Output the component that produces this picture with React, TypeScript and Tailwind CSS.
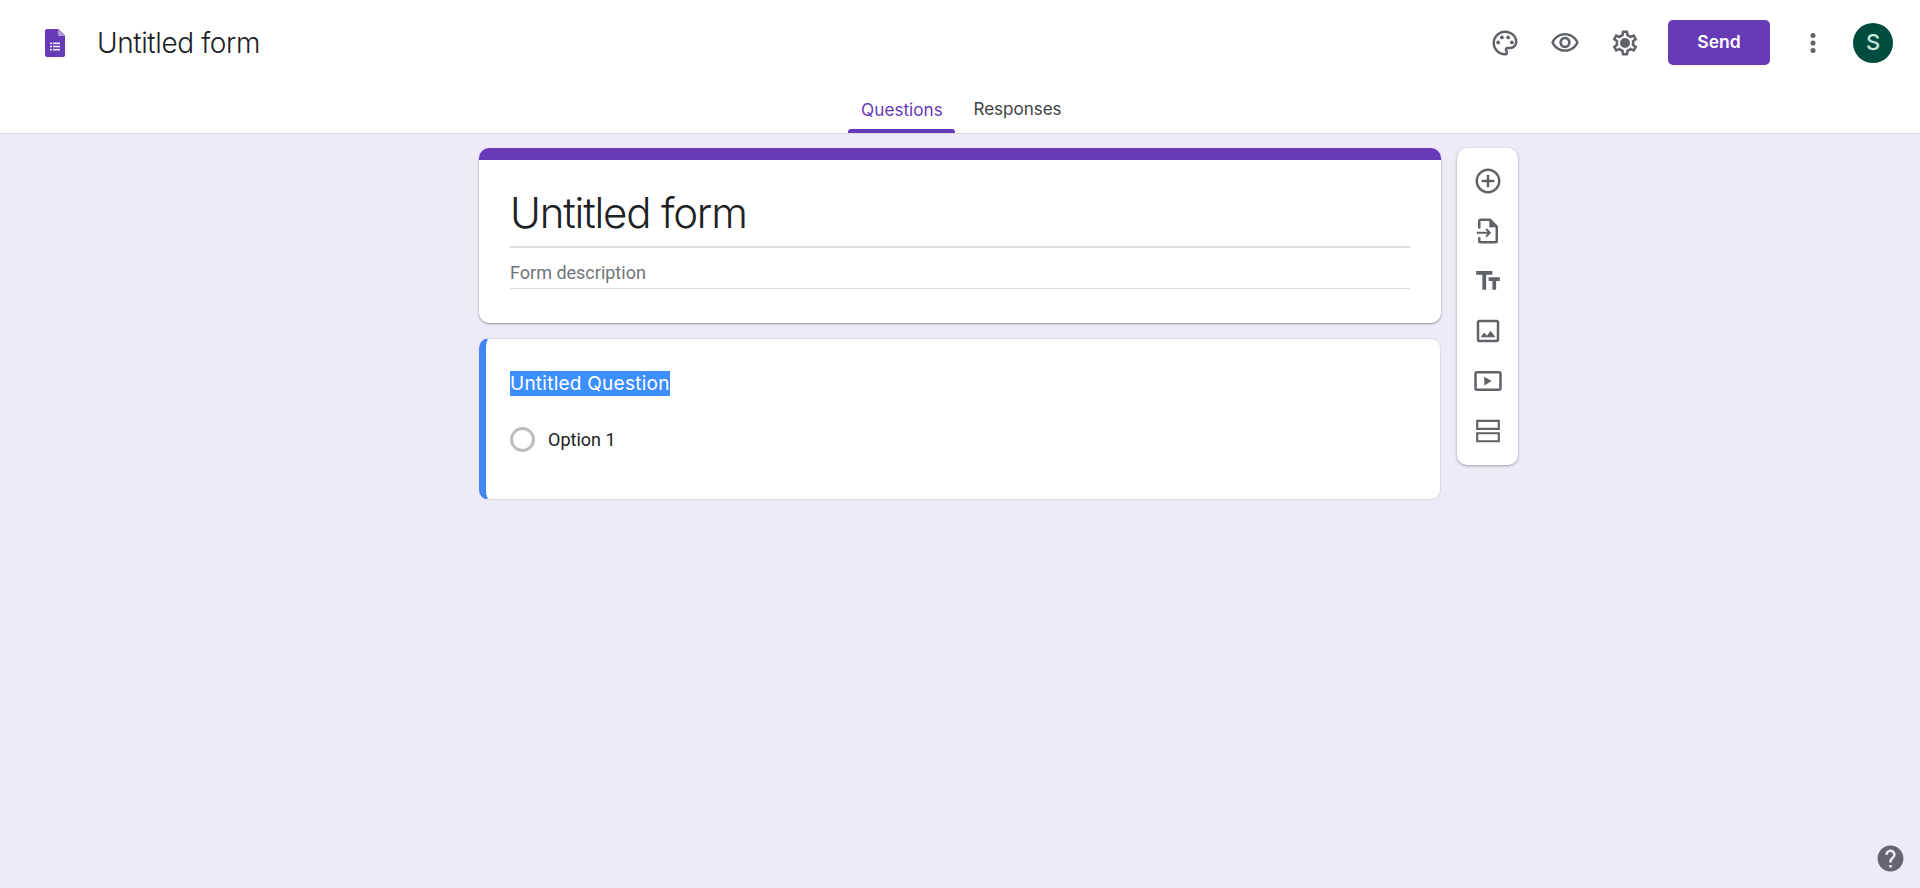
import React from 'react';

const Icon: React.FC<{ children: React.ReactNode }> = ({ children }) => (
  <svg viewBox="0 0 24 24" className="w-[30px] h-[30px] fill-[#5f6368] shrink-0">
    {children}
  </svg>
);

const PALETTE =
  'M12 22C6.49 22 2 17.51 2 12S6.49 2 12 2s10 4.04 10 9c0 3.31-2.69 6-6 6h-1.77c-.28 0-.5.22-.5.5 0 .12.05.23.13.33.41.47.64 1.06.64 1.67A2.5 2.5 0 0 1 12 22zm0-18c-4.41 0-8 3.59-8 8s3.59 8 8 8c.28 0 .5-.22.5-.5a.54.54 0 0 0-.14-.35c-.41-.46-.63-1.05-.63-1.65a2.5 2.5 0 0 1 2.5-2.5H16c2.21 0 4-1.79 4-4 0-3.86-3.59-7-8-7z';
const EYE =
  'M12 6c3.79 0 7.17 2.13 8.82 5.5C19.17 14.87 15.79 17 12 17s-7.17-2.13-8.82-5.5C4.83 8.13 8.21 6 12 6m0-2C7 4 2.73 7.11 1 11.5 2.73 15.89 7 19 12 19s9.27-3.11 11-7.5C21.27 7.11 17 4 12 4zm0 5c1.38 0 2.5 1.12 2.5 2.5S13.38 14 12 14s-2.5-1.12-2.5-2.5S10.62 9 12 9m0-2c-2.48 0-4.5 2.02-4.5 4.5S9.52 16 12 16s4.5-2.02 4.5-4.5S14.48 7 12 7z';
const GEAR =
  'M19.43 12.98c.04-.32.07-.64.07-.98 0-.34-.03-.66-.07-.98l2.11-1.65c.19-.15.24-.42.12-.64l-2-3.46c-.09-.16-.26-.25-.44-.25-.06 0-.12.01-.17.03l-2.49 1c-.52-.4-1.08-.73-1.69-.98l-.38-2.65C14.46 2.18 14.25 2 14 2h-4c-.25 0-.46.18-.49.42l-.38 2.65c-.61.25-1.17.59-1.69.98l-2.49-1c-.06-.02-.12-.03-.18-.03-.17 0-.34.09-.43.25l-2 3.46c-.13.22-.07.49.12.64l2.11 1.65c-.04.32-.07.65-.07.98 0 .33.03.66.07.98l-2.11 1.65c-.19.15-.24.42-.12.64l2 3.46c.09.16.26.25.44.25.06 0 .12-.01.17-.03l2.49-1c.52.4 1.08.73 1.69.98l.38 2.65c.03.24.24.42.49.42h4c.25 0 .46-.18.49-.42l.38-2.65c.61-.25 1.17-.59 1.69-.98l2.49 1c.06.02.12.03.18.03.17 0 .34-.09.43-.25l2-3.46c.12-.22.07-.49-.12-.64l-2.11-1.65zm-1.98-1.71c.04.31.05.52.05.73 0 .21-.02.43-.05.73l-.14 1.13.89.7 1.08.84-.7 1.21-1.27-.51-1.04-.42-.9.68c-.43.32-.84.56-1.25.73l-1.06.43-.16 1.13-.2 1.35h-1.4l-.19-1.35-.16-1.13-1.06-.43c-.43-.18-.83-.41-1.23-.71l-.91-.7-1.06.43-1.27.51-.7-1.21 1.08-.84.89-.7-.14-1.13c-.03-.31-.05-.54-.05-.74s.02-.43.05-.73l.14-1.13-.89-.7-1.08-.84.7-1.21 1.27.51 1.04.42.9-.68c.43-.32.84-.56 1.25-.73l1.06-.43.16-1.13.2-1.35h1.39l.19 1.35.16 1.13 1.06.43c.43.18.83.41 1.23.71l.91.7 1.06-.43 1.27-.51.7 1.21-1.07.85-.89.7.14 1.13z';

const FormsLogo = () => (
  <svg viewBox="0 0 20 28" className="w-5 h-7 shrink-0">
    <path d="M2 0h11.5L20 6.5V26a2 2 0 0 1-2 2H2a2 2 0 0 1-2-2V2a2 2 0 0 1 2-2z" fill="#673ab7" />
    <path d="M13 0l7 7h-5.5A1.5 1.5 0 0 1 13 5.5z" fill="#b39ddb" />
    <g fill="#f1ecf8">
      <rect x="5" y="13.5" width="2" height="1.6" />
      <rect x="8" y="13.5" width="7" height="1.6" />
      <rect x="5" y="16.7" width="2" height="1.6" />
      <rect x="8" y="16.7" width="7" height="1.6" />
      <rect x="5" y="19.9" width="2" height="1.6" />
      <rect x="8" y="19.9" width="7" height="1.6" />
    </g>
  </svg>
);

const ToolButton: React.FC<{ children: React.ReactNode }> = ({ children }) => (
  <div className="h-[50px] flex items-center justify-center">
    <Icon>{children}</Icon>
  </div>
);

export default function App() {
  return (
    <div className="min-h-[888px] bg-[#eeeaf8] relative overflow-hidden font-['Roboto',sans-serif]">
      <header className="h-[134px] bg-white border-b border-[#dadce0] flex flex-col">
        <div className="h-[85px] flex items-center pl-[45px] pr-[27px]">
          <FormsLogo />
          <span className="ml-[32px] text-[28px] leading-none text-[#202124] font-['Inter',sans-serif] font-light tracking-[-0.4px]">
            Untitled form
          </span>
          <div className="ml-auto flex items-center">
            <Icon>
              <path d={PALETTE} />
              <circle cx="6.5" cy="11.5" r="1.5" />
              <circle cx="9.5" cy="7.5" r="1.5" />
              <circle cx="14.5" cy="7.5" r="1.5" />
              <circle cx="17.5" cy="11.5" r="1.5" />
            </Icon>
            <div className="ml-[30px]">
              <Icon>
                <path d={EYE} />
              </Icon>
            </div>
            <div className="ml-[30px]">
              <Icon>
                <path d={GEAR} />
                <circle cx="12" cy="12" r="4" />
              </Icon>
            </div>
            <button className="ml-[28px] w-[102px] h-[45px] rounded-[5px] bg-[#673ab7] text-white text-[17.5px] font-semibold font-['Inter',sans-serif]">
              Send
            </button>
            <svg viewBox="0 0 24 24" className="ml-[28px] w-[30px] h-[30px] fill-[#5f6368]">
              <circle cx="12" cy="6" r="2" />
              <circle cx="12" cy="12" r="2" />
              <circle cx="12" cy="18" r="2" />
            </svg>
            <div className="ml-[25px] w-10 h-10 rounded-full bg-[#004d40] flex items-center justify-center text-[#c9e4dc] text-[22px] font-medium font-['Inter',sans-serif]">
              S
            </div>
          </div>
        </div>
        <nav className="flex-1 flex justify-center items-end pr-[10px]">
          <div className="relative h-[48px] w-[107px] pt-[2px] flex items-center justify-center text-[#673ab7] text-[17.2px] font-['Inter',sans-serif]">
            Questions
            <div className="absolute bottom-0 left-0 right-0 h-[4px] bg-[#673ab7] rounded-t-[3px]" />
          </div>
          <div className="h-[48px] ml-[18px] pt-[2px] flex items-center text-[#3c4043] text-[17px] font-['Inter',sans-serif]">
            Responses
          </div>
        </nav>
      </header>

      <main className="pl-[479px] pt-[14px] flex items-start gap-[16px]">
        <div className="w-[962px] flex flex-col gap-[15px]">
          <section className="h-[175px] bg-white rounded-[10px] overflow-hidden shadow-[0_1px_2px_rgba(60,64,67,0.5)]">
            <div className="h-3 bg-[#673ab7]" />
            <div className="px-[31px] pt-[23px]">
              <div className="box-content h-[63px] leading-[60px] text-[42px] text-[#202124] font-['Inter',sans-serif] font-light tracking-[-1.2px] border-b-2 border-[#dcdcdc]">
                Untitled form
              </div>
              <div className="box-content mt-[14px] h-[26px] leading-[22px] text-[18px] text-[#70757a] border-b border-[#dadce0]">
                Form description
              </div>
            </div>
          </section>

          <section className="h-[162px] bg-white rounded-[10px] border border-[#dadce0] border-l-[7px] border-l-[#4285f4] pl-[24px] pt-[32px]">
            <span className="inline-block h-[25px] leading-[25px] bg-[#3d8eff] text-white text-[19px] font-['Inter',sans-serif] tracking-[0.25px]">
              Untitled Question
            </span>
            <div className="mt-[29px] flex items-center">
              <div className="w-[25px] h-[25px] rounded-full border-[3px] border-[#bdbdbd]" />
              <span className="ml-[13px] text-[18px] text-[#202124]">Option 1</span>
            </div>
          </section>
        </div>

        <aside className="w-[61px] h-[317px] pb-[2px] bg-white rounded-[10px] shadow-[0_1px_3px_rgba(60,64,67,0.45)] flex flex-col justify-center">
          <ToolButton>
            <path d="M13 7h-2v4H7v2h4v4h2v-4h4v-2h-4V7zm-1-5C6.49 2 2 6.49 2 12s4.49 10 10 10 10-4.49 10-10S17.51 2 12 2zm0 18c-4.41 0-8-3.59-8-8s3.59-8 8-8 8 3.59 8 8-3.59 8-8 8z" />
          </ToolButton>
          <ToolButton>
            <path d="M6 2h8l6 6v12a2 2 0 0 1-2 2H6a2 2 0 0 1-2-2v-3h2v3h12V9h-5V4H6v6H4V4a2 2 0 0 1 2-2z" />
            <path d="M3 12.6h8.6l-1.7-1.7 1.1-1.1 3.6 3.6-3.6 3.6-1.1-1.1 1.7-1.7H3z" />
          </ToolButton>
          <ToolButton>
            <path d="M2.5 4v3h5v12h3V7h5V4h-13zm19 5h-9v3h3v7h3v-7h3V9z" />
          </ToolButton>
          <ToolButton>
            <path d="M19 5v14H5V5h14m0-2H5c-1.1 0-2 .9-2 2v14c0 1.1.9 2 2 2h14c1.1 0 2-.9 2-2V5c0-1.1-.9-2-2-2zm-4.86 8.86l-3 3.87L9 13.14 6 17h12l-3.86-5.14z" />
          </ToolButton>
          <ToolButton>
            <path d="M21 4H3c-1.1 0-2 .9-2 2v12c0 1.1.9 2 2 2h18c1.1 0 2-.9 2-2V6c0-1.1-.9-2-2-2zm0 14H3V6h18v12zM9 8.5v7l6-3.5-6-3.5z" />
          </ToolButton>
          <ToolButton>
            <path
              fillRule="evenodd"
              d="M2.5 3h19v8.1h-19zM4.2 4.7v4.7h15.6V4.7zM2.5 12.9h19V21h-19zM4.2 14.6v4.7h15.6v-4.7z"
            />
          </ToolButton>
        </aside>
      </main>

      <svg viewBox="0 0 24 24" className="absolute right-[14px] bottom-[14px] w-[31px] h-[31px] fill-[#68656e]">
        <path d="M12 2C6.48 2 2 6.48 2 12s4.48 10 10 10 10-4.48 10-10S17.52 2 12 2zm1 17h-2v-2h2v2zm2.07-7.75l-.9.92C13.45 12.9 13 13.5 13 15h-2v-.5c0-1.1.45-2.1 1.17-2.83l1.24-1.26c.37-.36.59-.86.59-1.41 0-1.1-.9-2-2-2s-2 .9-2 2H8c0-2.21 1.79-4 4-4s4 1.79 4 4c0 .88-.36 1.68-.93 2.25z" />
      </svg>
    </div>
  );
}
